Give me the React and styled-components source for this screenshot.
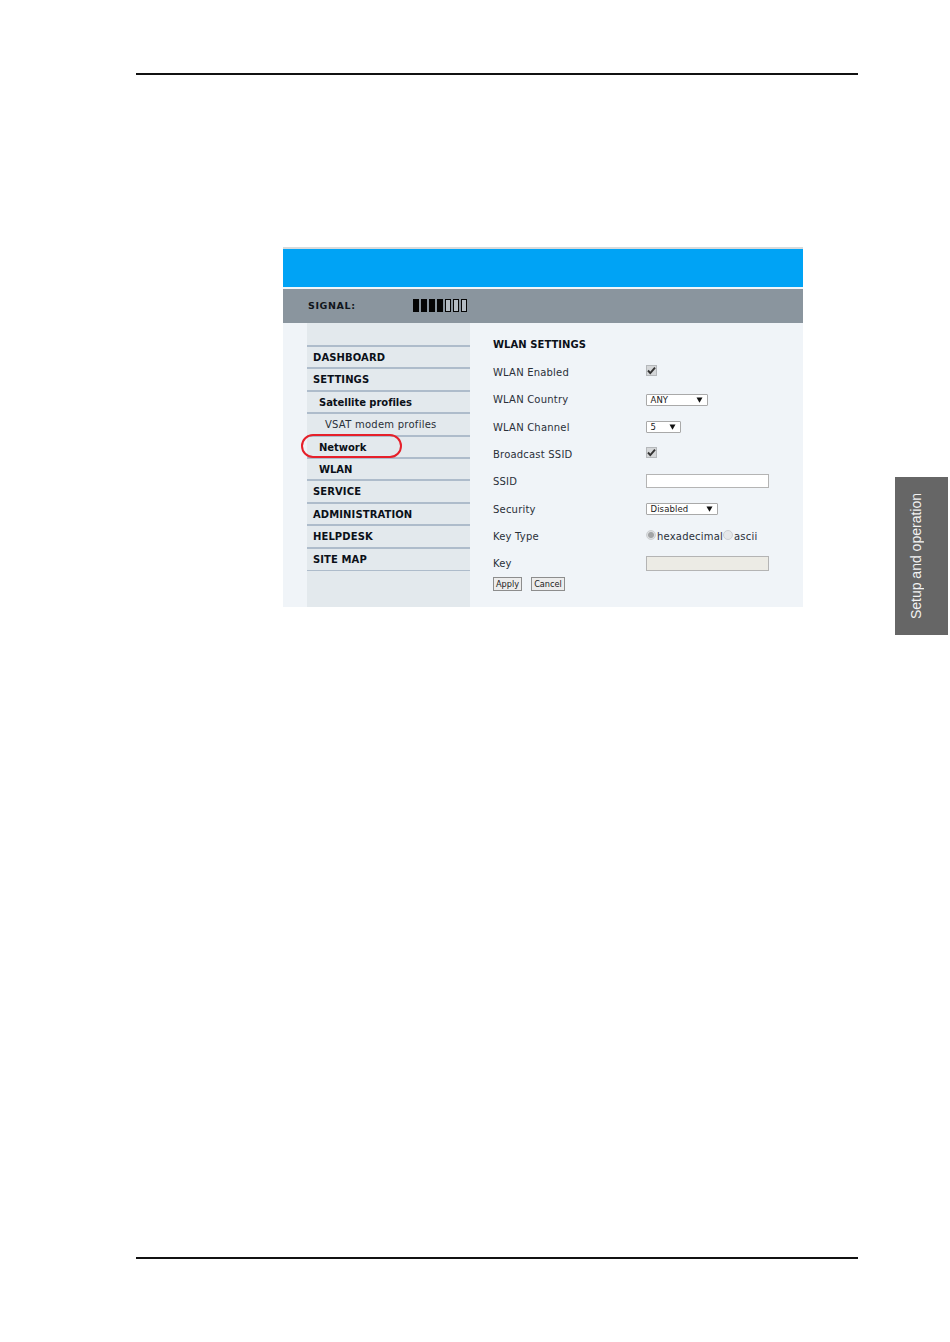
import styled, { createGlobalStyle } from "styled-components";

const GlobalStyle = createGlobalStyle`
  html, body {
    margin: 0;
    padding: 0;
    background: #fff;
  }
`;

const menuItems = [
  { label: "DASHBOARD", level: 0, weight: 700 },
  { label: "SETTINGS", level: 0, weight: 700 },
  { label: "Satellite profiles", level: 1, weight: 700 },
  { label: "VSAT modem profiles", level: 2, weight: 400 },
  { label: "Network", level: 1, weight: 700, circled: true },
  { label: "WLAN", level: 1, weight: 700 },
  { label: "SERVICE", level: 0, weight: 700 },
  { label: "ADMINISTRATION", level: 0, weight: 700 },
  { label: "HELPDESK", level: 0, weight: 700 },
  { label: "SITE MAP", level: 0, weight: 700 },
];

const signal = [1, 1, 1, 1, 0, 0, 0];

const App = () => {
  return (
    <Page>
      <GlobalStyle />
      <Sheet>
        <Rule />
        <Figure>
          <BlueBanner />
          <SignalBar>
            <SignalLabel>SIGNAL:</SignalLabel>
            <Meter>
              {signal.map((on, i) => (
                <MeterCell key={i} $on={on} />
              ))}
            </Meter>
          </SignalBar>
          <Body>
            <Sidebar>
              {menuItems.map((item) => (
                <MenuItem key={item.label} $level={item.level} $weight={item.weight}>
                  {item.label}
                  {item.circled && <Circle />}
                </MenuItem>
              ))}
            </Sidebar>
            <Form>
              <Title>WLAN SETTINGS</Title>
              <Row>
                <Label>WLAN Enabled</Label>
                <Check />
              </Row>
              <Row>
                <Label>WLAN Country</Label>
                <Select $width={62}>
                  ANY
                  <Arrow />
                </Select>
              </Row>
              <Row>
                <Label>WLAN Channel</Label>
                <Select $width={35}>
                  5
                  <Arrow />
                </Select>
              </Row>
              <Row>
                <Label>Broadcast SSID</Label>
                <Check />
              </Row>
              <Row>
                <Label>SSID</Label>
                <TextBox />
              </Row>
              <Row>
                <Label>Security</Label>
                <Select $width={72}>
                  Disabled
                  <Arrow />
                </Select>
              </Row>
              <Row>
                <Label>Key Type</Label>
                <RadioGroup>
                  <Radio $on />
                  hexadecimal
                  <Radio />
                  ascii
                </RadioGroup>
              </Row>
              <Row>
                <Label>Key</Label>
                <TextBox $disabled />
              </Row>
              <Buttons>
                <Button>Apply</Button>
                <Button>Cancel</Button>
              </Buttons>
            </Form>
          </Body>
        </Figure>
        <BottomRule />
      </Sheet>
      <SideTab>
        <SideTabText>Setup and operation</SideTabText>
      </SideTab>
    </Page>
  );
};

const Arrow = () => (
  <svg width="7" height="6" viewBox="0 0 7 6">
    <path d="M0.5 0.5h6L3.5 5.8z" fill="#111" />
  </svg>
);

const Check = () => (
  <CheckBox>
    <svg width="9" height="9" viewBox="0 0 9 9">
      <path d="M1 4.5l2.3 2.6L8 1.6" fill="none" stroke="#333" strokeWidth="1.9" />
    </svg>
  </CheckBox>
);

const Page = styled.div`
  display: grid;
  grid-template-columns: 136px 722px 37px 53px 2px;
  width: 950px;
  height: 1342px;
  overflow: hidden;
  font-family: "DejaVu Sans", Verdana, sans-serif;
`;

const Sheet = styled.div`
  grid-column: 2;
  display: flex;
  flex-direction: column;
  padding: 73px 0 83px;
  box-sizing: border-box;
  height: 1342px;
`;

const Rule = styled.div`
  height: 2px;
  background: #111;
`;

const BottomRule = styled(Rule)`
  margin-top: auto;
`;

const Figure = styled.div`
  width: 520px;
  margin: 172px 0 0 147px;
  border-top: 2px solid #d8dadb;
`;

const BlueBanner = styled.div`
  height: 38px;
  background: #00a3f5;
  border-bottom: 2px solid #f2f6f9;
`;

const SignalBar = styled.div`
  display: flex;
  align-items: center;
  height: 34px;
  padding: 0 0 1px 25px;
  box-sizing: border-box;
  background: #8a959e;
`;

const SignalLabel = styled.span`
  width: 105px;
  font-size: 9.5px;
  font-weight: 700;
  letter-spacing: 0.6px;
  color: #10151c;
`;

const Meter = styled.div`
  display: flex;
  gap: 2px;
`;

const MeterCell = styled.span`
  width: 6px;
  height: 13px;
  box-sizing: border-box;
  border: 1px solid #050505;
  background: ${(p) => (p.$on ? "#050505" : "#b4bcc3")};
`;

const Body = styled.div`
  display: flex;
  height: 284px;
  background: #f0f4f8;
`;

const Sidebar = styled.nav`
  width: 163px;
  margin-left: 24px;
  padding-top: 22px;
  box-sizing: border-box;
  background: #e3e9ed;
`;

const MenuItem = styled.div`
  position: relative;
  display: flex;
  align-items: center;
  height: 21px;
  padding-left: ${(p) => 6 + p.$level * 6}px;
  margin-bottom: -0.6px;
  border-top: 2px solid #aebccb;
  font-size: 10px;
  font-weight: ${(p) => p.$weight};
  letter-spacing: ${(p) => (p.$level === 0 ? "0.1px" : p.$level === 1 ? "-0.05px" : "0.25px")};
  color: ${(p) => (p.$weight === 700 ? "#0b1018" : "#2a3038")};

  &:last-child {
    border-bottom: 1px solid #aebccb;
  }
`;

const Circle = styled.span`
  position: absolute;
  z-index: 1;
  left: -6px;
  top: -3px;
  width: 101px;
  height: 24px;
  box-sizing: border-box;
  border: 2px solid #e6202a;
  border-radius: 12px;
`;

const Form = styled.div`
  flex: 1;
  padding: 16px 0 0 23px;
`;

const Title = styled.div`
  height: 20px;
  font-size: 10px;
  font-weight: 700;
  letter-spacing: 0.05px;
  color: #0b1018;
`;

const Row = styled.div`
  display: flex;
  align-items: center;
  height: 27.3px;
`;

const Label = styled.span`
  width: 153px;
  font-size: 10px;
  letter-spacing: 0.2px;
  color: #2a3038;
`;

const CheckBox = styled.span`
  display: flex;
  align-items: center;
  justify-content: center;
  width: 9px;
  height: 9px;
  margin-top: -4px;
  background: #d5d7d9;
  border: 0.5px solid #b5b8bb;
`;

const Select = styled.span`
  display: flex;
  align-items: center;
  justify-content: space-between;
  width: ${(p) => p.$width}px;
  height: 12px;
  padding: 0 4px 0 3.5px;
  box-sizing: border-box;
  background: #fff;
  border: 1px solid #a9a9a9;
  border-radius: 1px;
  font-size: 8.5px;
  letter-spacing: 0.1px;
  color: #1a1a1a;
`;

const TextBox = styled.span`
  width: 123px;
  height: ${(p) => (p.$disabled ? "15px" : "14px")};
  margin-top: -1px;
  box-sizing: border-box;
  border: 1px solid #b4b4b4;
  background: ${(p) => (p.$disabled ? "#ecebe5" : "#fff")};
`;

const RadioGroup = styled.span`
  display: flex;
  align-items: center;
  font-size: 10px;
  letter-spacing: 0.2px;
  color: #2a3038;
`;

const Radio = styled.span`
  width: 10px;
  height: 10px;
  margin: -3px 1px 0 0;
  box-sizing: border-box;
  border-radius: 50%;
  border: 1px solid #cdd0d3;
  background: ${(p) =>
    p.$on ? "radial-gradient(circle, #a2a4a6 0 2.5px, #dcdee0 3.5px)" : "#e6e8ea"};
`;

const Buttons = styled.div`
  display: flex;
  gap: 9px;
`;

const Button = styled.span`
  display: flex;
  align-items: center;
  height: 12px;
  padding: 0 2px;
  border: 1px solid #8d8d8d;
  background: #ececec;
  font-size: 8.2px;
  color: #1a1a1a;
`;

const SideTab = styled.aside`
  grid-column: 4;
  display: flex;
  align-items: center;
  justify-content: center;
  height: 158px;
  margin-top: 477px;
  padding-right: 11px;
  box-sizing: border-box;
  background: #666;
`;

const SideTabText = styled.span`
  writing-mode: vertical-rl;
  transform: rotate(180deg);
  font-family: "Liberation Sans", Arial, sans-serif;
  font-size: 14px;
  color: #f2f2f2;
  white-space: nowrap;
`;

export default App;
